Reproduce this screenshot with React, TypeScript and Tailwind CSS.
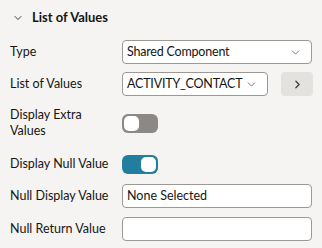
import { ChevronDown, ChevronRight } from "lucide-react";

function Select({ value, className }: { value: string; className: string }) {
  return (
    <div
      className={`flex h-[24px] shrink-0 items-center justify-between rounded-[4px] border border-[#9c9893] bg-white pl-[4px] pr-[9px] ${className}`}
    >
      <span className="whitespace-nowrap tracking-[-0.2px]">{value}</span>
      <ChevronDown className="h-[13px] w-[13px] shrink-0 text-[#5f5c58]" strokeWidth={1.5} />
    </div>
  );
}

function TextInput({ value }: { value?: string }) {
  return (
    <div className="flex h-[24px] w-[190px] shrink-0 items-center rounded-[4px] border border-[#9c9893] bg-white pl-[4px]">
      {value}
    </div>
  );
}

function Toggle({ on }: { on: boolean }) {
  return (
    <div
      className={`flex h-[19px] w-[36px] shrink-0 items-center rounded-[6px] p-[2px] ${
        on ? "justify-end bg-[#227e9e]" : "justify-start bg-[#8b8885]"
      }`}
    >
      <div className="h-[15px] w-[15px] rounded-[5px] bg-white" />
    </div>
  );
}

function Row({
  label,
  className,
  children,
}: {
  label: React.ReactNode;
  className: string;
  children: React.ReactNode;
}) {
  return (
    <div className={`flex items-center ${className}`}>
      <div className="w-[122px] shrink-0 whitespace-nowrap pl-[10px] leading-[16px]">{label}</div>
      {children}
    </div>
  );
}

export default function App() {
  return (
    <div
      className="h-[248px] w-[322px] bg-[#f5f4f2] text-[12.5px] text-[#161513]"
      style={{ fontFamily: "Lato, 'Noto Sans', sans-serif" }}
    >
      <div className="flex h-[36px] items-center pl-[12px]">
        <ChevronDown className="h-[12px] w-[12px] text-[#3a3835]" strokeWidth={2} />
        <span className="ml-[8px] text-[13px] font-bold">List of Values</span>
      </div>

      <Row label="Type" className="mt-[4px] h-[24px]">
        <Select value="Shared Component" className="w-[190px]" />
      </Row>

      <Row label="List of Values" className="mt-[8px] h-[24px]">
        <Select value="ACTIVITY_CONTACT" className="w-[146px]" />
        <button className="ml-[13px] flex h-[24px] w-[32px] shrink-0 items-center justify-center rounded-[4px] bg-[#e4e2df]">
          <ChevronRight className="h-[13px] w-[13px] text-[#3a3835]" strokeWidth={2.2} />
        </button>
      </Row>

      <Row
        label={
          <>
            Display Extra
            <br />
            Values
          </>
        }
        className="mt-[8px] h-[38px]"
      >
        <Toggle on={false} />
      </Row>

      <Row label="Display Null Value" className="mt-[8px] h-[28px]">
        <Toggle on={true} />
      </Row>

      <Row label="Null Display Value" className="mt-[6px] h-[24px]">
        <TextInput value="None Selected" />
      </Row>

      <Row label="Null Return Value" className="mt-[9px] h-[24px]">
        <TextInput />
      </Row>
    </div>
  );
}
